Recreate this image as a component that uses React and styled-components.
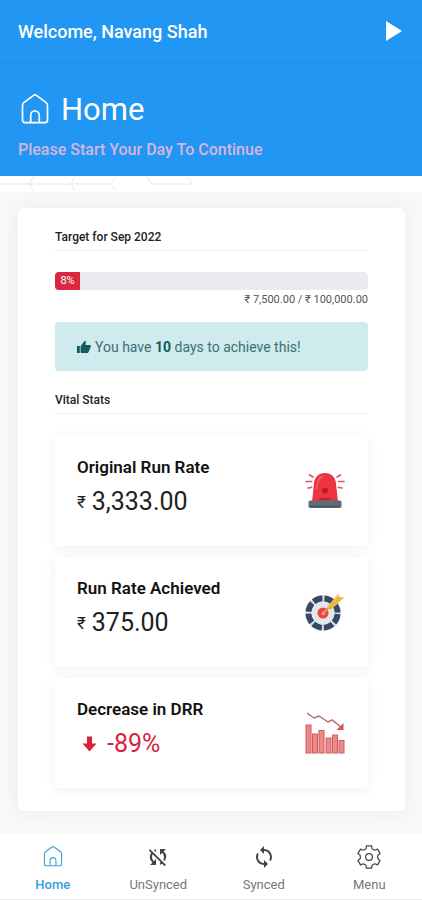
import React from 'react';
import styled, { createGlobalStyle } from 'styled-components';
import { MdSync, MdSyncDisabled } from 'react-icons/md';

const GlobalStyle = createGlobalStyle`
  * {
    box-sizing: border-box;
  }

  body {
    margin: 0;
    background: #f7f8f8;
    color: #111;
    font-family: Roboto, 'Liberation Sans', sans-serif;
  }

  h1, h2, h3, p {
    margin: 0;
  }
`;

const Screen = styled.div`
  min-height: 100vh;
  display: flex;
  flex-direction: column;
`;

const TopBar = styled.header`
  display: flex;
  align-items: center;
  justify-content: space-between;
  height: 63px;
  padding: 0 20px 0 18px;
  background: #2196f3;
  color: #fff;
  font-size: 18px;
  font-weight: 500;
  border-bottom: 1px solid #1d8de8;
`;

const StartButton = styled.button`
  display: flex;
  padding: 0;
  border: none;
  background: transparent;
  color: #fff;
  cursor: pointer;
`;

const Hero = styled.section`
  padding: 27px 18px 16px;
  background: #2196f3;
  color: #fff;
`;

const HeroTitle = styled.h1`
  display: flex;
  align-items: center;
  gap: 10px;
  padding-left: 1px;
  font-size: 31px;
  line-height: 40px;
  font-weight: 400;
`;

const HeroNote = styled.p`
  margin-top: 10px;
  font-size: 16px;
  line-height: 20px;
  font-weight: 500;
  color: #d9b5de;
`;

const PatternStrip = styled.div`
  height: 16px;
  background: #fff;
  overflow: hidden;

  svg {
    display: block;
  }
`;

const Content = styled.main`
  flex: 1;
  padding: 16px 17px 22px 18px;
`;

const Panel = styled.section`
  padding: 20px 37px 23px;
  background: #fff;
  border-radius: 6px;
  box-shadow: 0 0 16px rgba(70, 110, 125, 0.07);
`;

const SectionTitle = styled.h2`
  padding-bottom: 4px;
  border-bottom: 1px solid #eceeef;
  font-size: 12px;
  line-height: 18px;
  font-weight: 500;
  color: #222;
`;

const Progress = styled.div`
  height: 18px;
  margin-top: 21px;
  background: #e9ebee;
  border-radius: 4px;
  overflow: hidden;
`;

const ProgressBar = styled.div`
  height: 100%;
  background: #da2841;
  color: #fff;
  font-size: 11px;
  line-height: 18px;
  text-align: center;
`;

const ProgressNote = styled.p`
  margin-top: 1px;
  font-size: 11px;
  line-height: 18px;
  text-align: right;
  color: #555;
`;

const Notice = styled.div`
  display: flex;
  align-items: center;
  gap: 4px;
  height: 49px;
  margin: 13px 0 20px;
  padding: 0 22px;
  background: #cfebed;
  border-radius: 4px;
  color: #3c7074;
  font-size: 14px;

  strong {
    color: #0f5b60;
  }

  svg {
    color: #0f5b60;
  }
`;

const StatList = styled.div`
  display: grid;
  gap: 11px;
  margin-top: 22px;
`;

const StatCard = styled.article`
  display: flex;
  align-items: center;
  justify-content: space-between;
  height: 110px;
  padding: 0 23px 0 22px;
  background: #fff;
  border-radius: 4px;
  box-shadow: 0 2px 12px rgba(70, 110, 125, 0.09);
`;

const StatText = styled.div`
  display: flex;
  flex-direction: column;
  gap: 7px;
  padding-bottom: 10px;
`;

const StatName = styled.h3`
  font-size: 17px;
  line-height: 24px;
  font-weight: 600;
  color: #111;
`;

const StatValue = styled.p`
  display: flex;
  align-items: center;
  gap: ${({ $down }) => ($down ? '10px' : '6px')};
  padding-left: ${({ $down }) => ($down ? '5px' : '0')};
  font-size: 25px;
  line-height: 32px;
  color: ${({ $down }) => ($down ? '#d8233d' : '#222')};
`;

const Rupee = styled.span`
  font-size: 17px;
`;

const NavBar = styled.nav`
  display: grid;
  grid-template-columns: repeat(4, 1fr);
  height: 67px;
  padding-top: 12px;
  background: #fff;
  border-bottom: 1px solid #e8e8e8;
`;

const NavLink = styled.a`
  display: flex;
  flex-direction: column;
  align-items: center;
  gap: 8px;
  font-size: 13px;
  line-height: 16px;
  font-weight: ${({ $active }) => ($active ? 500 : 400)};
  color: ${({ $active }) => ($active ? '#3a9ddb' : '#777')};
  text-decoration: none;

  svg {
    height: 24px;
    color: ${({ $active }) => ($active ? '#3a9ddb' : '#444')};
  }
`;

const HomeIcon = ({ size, stroke }) => (
  <svg width={size} height={size} viewBox="0 1 32 32" fill="none" stroke="currentColor" strokeWidth={stroke} strokeLinejoin="round" aria-hidden="true">
    <path d="M3.500 12.500c0-1.400.5-2.300 1.600-3.100L14.600 2.400c.9-.7 1.900-.7 2.800 0l9.500 7c1.100.8 1.600 1.700 1.600 3.100V27c0 1.700-1 2.700-2.700 2.700H6.200c-1.700 0-2.700-1-2.700-2.700z" />
    <path d="M11.700 29.500v-7.300a4.300 4.300 0 0 1 8.600 0v7.300" />
  </svg>
);

const GearIcon = () => (
  <svg width="24" height="24" viewBox="-12 -12 24 24" fill="none" stroke="currentColor" strokeWidth="1.200" strokeLinejoin="round" aria-hidden="true">
    <path d="M-2.600-11.200H2.600L3-8.300 5.700-6.800 8.500-7.900 11.100-3.400 8.700-1.600V1.600L11.100 3.400 8.500 7.900 5.700 6.800 3 8.300 2.600 11.200H-2.600L-3 8.300-5.700 6.800-8.500 7.900-11.100 3.400-8.700 1.600V-1.600L-11.100-3.400-8.500-7.900-5.700-6.800-3-8.300z" />
    <circle r="3.400" />
  </svg>
);

const PlayIcon = () => (
  <svg width="16" height="20" viewBox="0 0 16 20" fill="currentColor" aria-hidden="true">
    <path d="M0 0l16 10L0 20z" />
  </svg>
);

const ThumbIcon = () => (
  <svg width="14" height="14" viewBox="0 0 14 14" fill="currentColor" aria-hidden="true">
    <path d="M0 6h2.800v7H0zM3.600 12V6.300l3.500-4.900C7.600.7 9 1.100 8.900 2.300L8.400 5h4.400c.9 0 1.300.8 1 1.500l-2.100 5.300c-.3.800-.8 1.200-1.700 1.200H5c-.8 0-1.400-.4-1.400-1z" />
  </svg>
);

const DownIcon = () => (
  <svg width="15" height="16" viewBox="0 0 15 16" fill="currentColor" aria-hidden="true">
    <path d="M5 .5h5v7h4.500l-7 8-7-8H5z" />
  </svg>
);

const SirenIcon = () => (
  <svg width="40" height="40" viewBox="0 0 40 40" aria-hidden="true">
    <g stroke="#d65a6c" strokeWidth="1.700" strokeLinecap="round">
      <path d="M4.500 4l3.500 2M1 10.500h5.500M3 17l3.500-.7M35.500 4l-3.500 2M39 10.500h-5.500M37 17l-3.500-.7" />
    </g>
    <path d="M7 31L9 12.500C9.600 5.800 14 2 20 2s10.400 3.800 11 10.500L33 31z" fill="#ee3440" />
    <path d="M11.500 18c.3-6.500 1.500-10.500 6-12.500" fill="none" stroke="#f5606a" strokeWidth="1.500" strokeLinecap="round" />
    <circle cx="20" cy="19.500" r="3" fill="#b81f31" />
    <path d="M15 27h10l1 2H14z" fill="#b92535" />
    <rect x="3.500" y="29.500" width="33" height="7.500" rx="1.800" fill="#5f6b78" />
    <path d="M5 35.500h30" stroke="#465362" strokeWidth="1.500" />
  </svg>
);

const TargetIcon = () => (
  <svg width="40" height="40" viewBox="0 0 40 40" aria-hidden="true">
    <circle cx="18" cy="21" r="18" fill="#dfe4ea" />
    <circle cx="18" cy="21" r="14.500" fill="none" stroke="#384967" strokeWidth="6" strokeDasharray="9.400 1.988" strokeDashoffset="-1" />
    <circle cx="18" cy="21" r="11.500" fill="#e4e6ec" />
    <circle cx="18" cy="21" r="5.500" fill="#ec4544" />
    <path d="M16 22.500l2-3 2.500 1-1 2.500z" fill="#f7aaa4" />
    <path d="M18.500 21L29 10" stroke="#d6a339" strokeWidth="2" />
    <path d="M22 15L33.500 1.500l.7 3.800 5.300.2L25.500 18z" fill="#f0bf49" />
    <path d="M24 16.500L36 5" stroke="#d6a339" strokeWidth="1" />
  </svg>
);

const BARS = [
  [1, 14],
  [7.5, 23],
  [14, 19.5],
  [21, 27],
  [27.5, 24],
  [34, 29.5],
];

const ChartIcon = () => (
  <svg width="40" height="44" viewBox="0 0 40 44" aria-hidden="true">
    {BARS.map(([x, y]) => (
      <rect key={x} x={x} y={y} width="5" height={42 - y} fill="#ef8988" stroke="#cc5d60" />
    ))}
    <path d="M2 2l7 5 5-2 9 6 4-2 9 7" fill="none" stroke="#b96c72" strokeWidth="1.500" />
    <path d="M38.500 12v7h-7z" fill="#d95155" />
  </svg>
);

const STATS = [
  { name: 'Original Run Rate', value: '3,333.00', icon: <SirenIcon /> },
  { name: 'Run Rate Achieved', value: '375.00', icon: <TargetIcon /> },
  { name: 'Decrease in DRR', value: '-89%', down: true, icon: <ChartIcon /> },
];

const NAV_ITEMS = [
  { label: 'Home', active: true, icon: <HomeIcon size={22} stroke={1.6} /> },
  { label: 'UnSynced', icon: <MdSyncDisabled size={24} /> },
  { label: 'Synced', icon: <MdSync size={24} /> },
  { label: 'Menu', icon: <GearIcon /> },
];

const App = () => {
  const percent = 8;

  return (
    <Screen>
      <GlobalStyle />
      <TopBar>
        <span>Welcome, Navang Shah</span>
        <StartButton type="button" aria-label="Start day">
          <PlayIcon />
        </StartButton>
      </TopBar>
      <Hero>
        <HeroTitle>
          <HomeIcon size={32} stroke={1.7} />
          Home
        </HeroTitle>
        <HeroNote>Please Start Your Day To Continue</HeroNote>
      </Hero>
      <PatternStrip>
        <svg width="200" height="16" viewBox="0 0 200 16" fill="none" stroke="#e6e8e8" aria-hidden="true">
          <path d="M0 8h112M34 0l-5 8 5 7M75 0l-4 8 4 7M117 0l-6 8 5 7M146 0l6 8h40l-4-7" />
        </svg>
      </PatternStrip>
      <Content>
        <Panel>
          <SectionTitle>Target for Sep 2022</SectionTitle>
          <Progress role="progressbar" aria-valuenow={percent} aria-valuemin={0} aria-valuemax={100}>
            <ProgressBar style={{ width: `${percent}%` }}>{percent}%</ProgressBar>
          </Progress>
          <ProgressNote>₹ 7,500.00 / ₹ 100,000.00</ProgressNote>
          <Notice>
            <ThumbIcon />
            <span>
              You have <strong>10</strong> days to achieve this!
            </span>
          </Notice>
          <SectionTitle>Vital Stats</SectionTitle>
          <StatList>
            {STATS.map(({ name, value, down, icon }) => (
              <StatCard key={name}>
                <StatText>
                  <StatName>{name}</StatName>
                  <StatValue $down={down}>
                    {down ? <DownIcon /> : <Rupee>₹</Rupee>}
                    {value}
                  </StatValue>
                </StatText>
                {icon}
              </StatCard>
            ))}
          </StatList>
        </Panel>
      </Content>
      <NavBar>
        {NAV_ITEMS.map(({ label, active, icon }) => (
          <NavLink key={label} href="#" $active={active}>
            {icon}
            {label}
          </NavLink>
        ))}
      </NavBar>
    </Screen>
  );
};

export default App;
